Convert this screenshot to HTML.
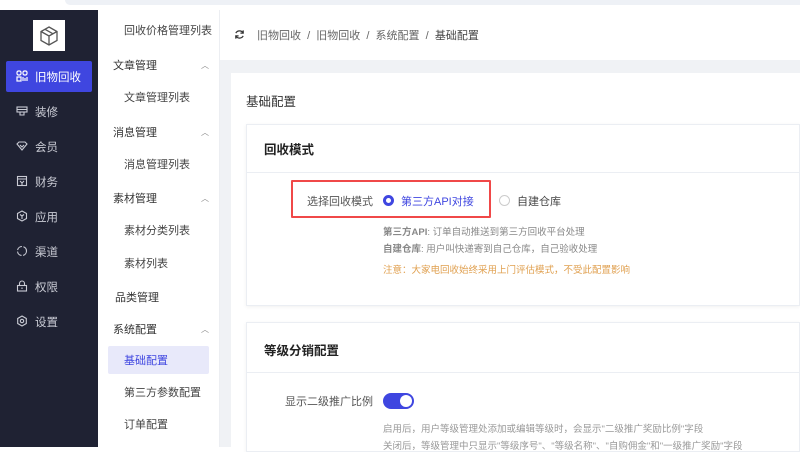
<!DOCTYPE html><html><head><meta charset="utf-8"><style>
*{margin:0;padding:0;box-sizing:border-box}
body{width:800px;height:447px;overflow:hidden;background:#fff;font-family:"Liberation Sans","Noto Sans CJK SC",sans-serif;position:relative}
.a{position:absolute;white-space:nowrap}
.side{left:0;top:10px;width:98px;height:437px;background:#1f2233}
.si{left:0;width:98px;color:#c9cbd4;font-size:11.5px}
.si svg{position:absolute;left:16px;top:1px}
.si span{position:absolute;left:35px;top:0}
.sub{font-size:11px;color:#333}
.subi{color:#444}
.car{font-size:8px;color:#888}
</style></head><body>
<div class="a" style="left:65px;top:0;width:735px;height:5px;background:#eef1f6;border-radius:0 0 0 6px"></div>
<div class="a side"></div>
<div class="a" style="left:33px;top:20px;width:32px;height:31px;background:#fff"></div>
<svg class="a" style="left:38px;top:25px" width="22" height="22" viewBox="0 0 22 22" fill="none" stroke="#555" stroke-width="1.3"><path d="M11 2l8 4.5v9L11 20l-8-4.5v-9z"/><path d="M3 6.5l8 4.5 8-4.5M11 11v9"/><path d="M7 4.3l8 4.5"/></svg>
<div class="a" style="left:6px;top:61px;width:86px;height:31px;background:#3f46e0;border-radius:2px"></div>
<svg class="a" style="left:16px;top:70px" width="12" height="12" viewBox="0 0 12 12" fill="none" stroke="#fff" stroke-width="1.2"><rect x="1" y="1" width="4" height="4" rx="1.5"/><rect x="7" y="1" width="4" height="4" rx="1.5"/><rect x="1" y="7" width="4" height="4"/><path d="M7 7v4M9 8v3M11 7v4"/></svg>
<div class="a" style="left:35px;top:69px;color:#fff;font-size:11.5px">旧物回收</div>
<div class="a si" style="top:104px"><svg width="12" height="12" viewBox="0 0 12 12" fill="none" stroke="#c9cbd4" stroke-width="1.1"><rect x="1" y="2" width="10" height="5"/><path d="M4 7v3h4V7M1 4.5h10"/></svg><span>装修</span></div>
<div class="a si" style="top:139px"><svg width="12" height="12" viewBox="0 0 12 12" fill="none" stroke="#c9cbd4" stroke-width="1.1"><path d="M1 4l2-2h6l2 2-5 6z"/><path d="M4 5l2 2 2-2"/></svg><span>会员</span></div>
<div class="a si" style="top:174px"><svg width="12" height="12" viewBox="0 0 12 12" fill="none" stroke="#c9cbd4" stroke-width="1.1"><rect x="1.5" y="1.5" width="9" height="9"/><path d="M1.5 4h9M4 6l2 2 2-2M6 8v3"/></svg><span>财务</span></div>
<div class="a si" style="top:209px"><svg width="12" height="12" viewBox="0 0 12 12" fill="none" stroke="#c9cbd4" stroke-width="1.1"><path d="M6 1l4.5 2.5v5L6 11 1.5 8.5v-5z"/><path d="M4 4.5l2 1.5 2-1.5M6 6v3"/></svg><span>应用</span></div>
<div class="a si" style="top:244px"><svg width="12" height="12" viewBox="0 0 12 12" fill="none" stroke="#c9cbd4" stroke-width="1.1"><circle cx="6" cy="6" r="4.5" stroke-dasharray="6 1.5"/></svg><span>渠道</span></div>
<div class="a si" style="top:279px"><svg width="12" height="12" viewBox="0 0 12 12" fill="none" stroke="#c9cbd4" stroke-width="1.1"><rect x="1.5" y="5.5" width="9" height="5.5"/><path d="M3.5 5.5V3.5a2.5 2.5 0 015 0v2M6 7.5v1.5"/></svg><span>权限</span></div>
<div class="a si" style="top:314px"><svg width="12" height="12" viewBox="0 0 12 12" fill="none" stroke="#c9cbd4" stroke-width="1.1"><path d="M6 1l4.3 2.5v5L6 11 1.7 8.5v-5z"/><circle cx="6" cy="6" r="1.7"/></svg><span>设置</span></div>

<div class="a" style="left:219px;top:10px;width:1px;height:437px;background:#eceef2"></div>
<div class="a sub subi" style="left:124px;top:22px">回收价格管理列表</div>
<div class="a sub" style="left:113px;top:57px">文章管理</div><div class="a car" style="left:201px;top:60px">︿</div>
<div class="a sub subi" style="left:124px;top:89px">文章管理列表</div>
<div class="a sub" style="left:113px;top:124px">消息管理</div><div class="a car" style="left:201px;top:127px">︿</div>
<div class="a sub subi" style="left:124px;top:156px">消息管理列表</div>
<div class="a sub" style="left:113px;top:190px">素材管理</div><div class="a car" style="left:201px;top:193px">︿</div>
<div class="a sub subi" style="left:124px;top:222px">素材分类列表</div>
<div class="a sub subi" style="left:124px;top:255px">素材列表</div>
<div class="a sub" style="left:115px;top:289px">品类管理</div>
<div class="a sub" style="left:113px;top:321px">系统配置</div><div class="a car" style="left:201px;top:324px">︿</div>
<div class="a" style="left:108px;top:346px;width:101px;height:28px;background:#e8e9fa;border-radius:2px"></div>
<div class="a sub" style="left:124px;top:352px;color:#3f46e0">基础配置</div>
<div class="a sub subi" style="left:124px;top:384px">第三方参数配置</div>
<div class="a sub subi" style="left:124px;top:416px">订单配置</div>

<div class="a" style="left:220px;top:60px;width:580px;height:387px;background:#f0f2f5"></div>
<div class="a" style="left:220px;top:10px;width:580px;height:50px;background:#fff"></div>
<svg class="a" style="left:234px;top:29px" width="11" height="11" viewBox="0 0 12 12" fill="none" stroke="#333" stroke-width="1.4"><path d="M10 4.5A4.5 4.5 0 002 4.5M2 7.5a4.5 4.5 0 008 0"/><path d="M10 1.5v3H7M2 10.5v-3h3"/></svg>
<div class="a" style="left:257px;top:27px;font-size:11px;color:#666">旧物回收 &nbsp;/&nbsp; 旧物回收 &nbsp;/&nbsp; 系统配置 &nbsp;/&nbsp; <span style="color:#444">基础配置</span></div>
<div class="a" style="left:231px;top:73px;width:569px;height:374px;background:#fff"></div>
<div class="a" style="left:246px;top:91px;font-size:12.5px;color:#333">基础配置</div>
<div class="a" style="left:246px;top:124px;width:554px;height:182px;background:#fff;border:1px solid #ebeef3;box-shadow:0 1px 4px rgba(0,0,0,.06)"></div>
<div class="a" style="left:264px;top:139px;font-size:12.5px;font-weight:bold;color:#222">回收模式</div>
<div class="a" style="left:247px;top:172px;width:553px;height:1px;background:#ebeef3"></div>
<div class="a" style="left:291px;top:180px;width:200px;height:38px;border:2px solid #f04848;border-radius:1px"></div>
<div class="a" style="left:307px;top:193px;font-size:11px;color:#555">选择回收模式</div>
<div class="a" style="left:383px;top:195px;width:11px;height:11px;border-radius:50%;border:3px solid #3f46e0;background:#fff"></div>
<div class="a" style="left:401px;top:193px;font-size:11px;color:#3f46e0">第三方API对接</div>
<div class="a" style="left:499px;top:195px;width:11px;height:11px;border-radius:50%;border:1px solid #ccc"></div>
<div class="a" style="left:517px;top:193px;font-size:11px;color:#444">自建仓库</div>
<div class="a" style="left:383px;top:224px;font-size:9.5px;color:#888"><b style="font-weight:600">第三方API</b>: 订单自动推送到第三方回收平台处理</div>
<div class="a" style="left:383px;top:241px;font-size:9.5px;color:#888"><b style="font-weight:600">自建仓库</b>: 用户叫快递寄到自己仓库，自己验收处理</div>
<div class="a" style="left:383px;top:262px;font-size:9.5px;color:#e0a050">注意：大家电回收始终采用上门评估模式，不受此配置影响</div>
<div class="a" style="left:246px;top:322px;width:554px;height:130px;background:#fff;border:1px solid #ebeef3;box-shadow:0 1px 4px rgba(0,0,0,.06)"></div>
<div class="a" style="left:264px;top:340px;font-size:12.5px;font-weight:bold;color:#222">等级分销配置</div>
<div class="a" style="left:247px;top:372px;width:553px;height:1px;background:#ebeef3"></div>
<div class="a" style="left:285px;top:393px;font-size:11px;color:#555">显示二级推广比例</div>
<div class="a" style="left:383px;top:393px;width:31px;height:16px;border-radius:8px;background:#3f46e0"></div>
<div class="a" style="left:400px;top:395px;width:12px;height:12px;border-radius:50%;background:#fff"></div>
<div class="a" style="left:383px;top:421px;font-size:9.5px;color:#999">启用后，用户等级管理处添加或编辑等级时，会显示"二级推广奖励比例"字段</div>
<div class="a" style="left:383px;top:438px;font-size:9.5px;color:#999">关闭后，等级管理中只显示"等级序号"、"等级名称"、"自购佣金"和"一级推广奖励"字段</div>
</body></html>
